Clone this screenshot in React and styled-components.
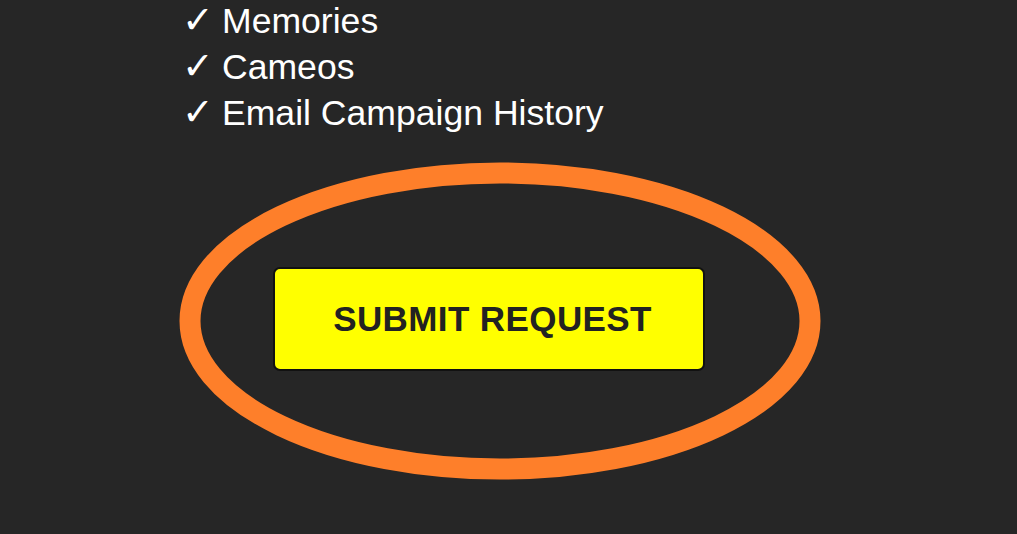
import React from "react";
import styled, { createGlobalStyle } from "styled-components";

const GlobalStyle = createGlobalStyle`
  html, body {
    margin: 0;
    padding: 0;
    background: #262626;
  }
  body {
    width: 1017px;
    height: 534px;
    overflow: hidden;
    font-family: "Liberation Sans", Arial, sans-serif;
  }
`;

const Page = styled.div`
  width: 1017px;
  height: 534px;
  background: #262626;
  padding-left: 182px;
  box-sizing: border-box;
`;

const List = styled.ul`
  list-style: none;
  margin: 0;
  padding: 0;
`;

const Item = styled.li`
  display: flex;
  align-items: baseline;
  height: 46px;
  line-height: 41px;
  font-size: 35.6px;
  color: #ffffff;
`;

const Check = styled.span`
  font-family: "DejaVu Sans", sans-serif;
  font-size: 38px;
  line-height: 41px;
  width: 40px;
  flex: none;
`;

const ButtonArea = styled.div`
  position: relative;
  margin: 129px 0 0 91px;
  width: 432px;
`;

const Button = styled.button`
  width: 432px;
  height: 104px;
  box-sizing: border-box;
  background: #ffff00;
  border: 2px solid #111;
  border-radius: 7px;
  font-family: "Liberation Sans", Arial, sans-serif;
  font-weight: bold;
  font-size: 35px;
  letter-spacing: 0.4px;
  color: #222;
  padding: 0 0 0 7px;
  cursor: pointer;
`;

const Ring = styled.svg`
  position: absolute;
  left: -94px;
  top: -105px;
  width: 642px;
  height: 318px;
  pointer-events: none;
`;

const items = ["Memories", "Cameos", "Email Campaign History"];

const App = () => {
  return (
    <React.Fragment>
      <GlobalStyle />
      <Page>
        <List>
          {items.map((label) => (
            <Item key={label}>
              <Check>✓</Check>
              {label}
            </Item>
          ))}
        </List>
        <ButtonArea>
          <Button>SUBMIT REQUEST</Button>
          <Ring viewBox="0 0 642 318">
            <ellipse cx="321" cy="159" rx="310" ry="148" fill="none" stroke="#fe7f2a" strokeWidth="21" />
          </Ring>
        </ButtonArea>
      </Page>
    </React.Fragment>
  );
};

export default App;
